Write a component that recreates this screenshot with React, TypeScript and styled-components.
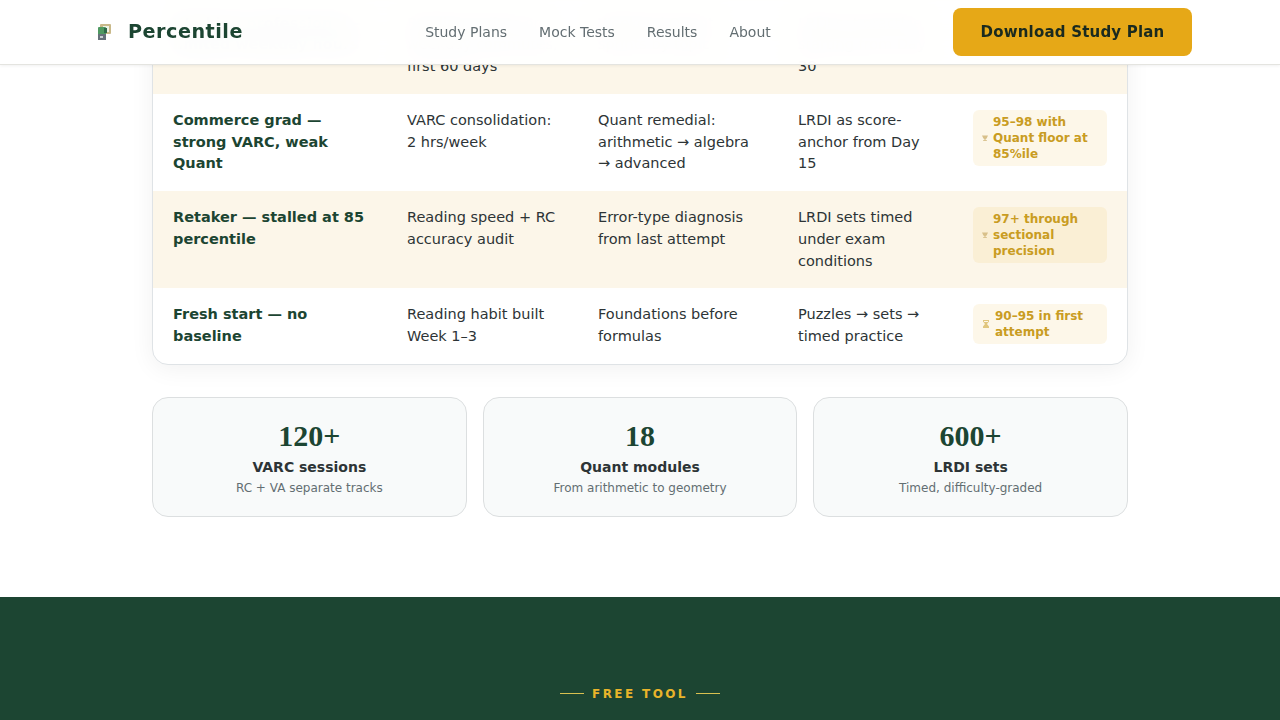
import React from 'react'
import styled, { createGlobalStyle } from 'styled-components'

const GREEN = '#1c4532'
const GOLD = '#e6a817'
const GOLD_TEXT = '#c99c22'
const SLATE = '#2d3436'
const MUTED = '#636e72'
const CREAM = '#fcf6e9'

const GlobalStyle = createGlobalStyle`
  html, body {
    margin: 0;
    padding: 0;
    height: 720px;
    overflow: hidden;
    background: #fff;
    font-family: "DejaVu Sans", Verdana, sans-serif;
    color: ${SLATE};
  }
  * { box-sizing: border-box; }
`

const Nav = styled.nav`
  position: fixed;
  top: 0;
  left: 0;
  right: 0;
  z-index: 10;
  height: 65px;
  padding: 0 88px 1px;
  display: flex;
  align-items: center;
  justify-content: space-between;
  background: rgba(255, 255, 255, 0.96);
  backdrop-filter: blur(12px);
  border-bottom: 1px solid #e4e4e0;
  box-shadow: 0 1px 3px rgba(0, 0, 0, 0.06);
`

const Brand = styled.div`
  display: flex;
  align-items: center;
  gap: 16px;
  padding-left: 8px;
  font-size: 19.2px;
  font-weight: 700;
  letter-spacing: 0.5px;
  color: ${GREEN};
`

const NavLinks = styled.div`
  display: flex;
  gap: 32px;
`

const NavLink = styled.a`
  font-size: 14px;
  color: ${MUTED};
  text-decoration: none;
`

const CtaButton = styled.button`
  width: 239px;
  height: 48px;
  padding: 0;
  border: 0;
  border-radius: 8px;
  background: ${GOLD};
  color: #1a2a1f;
  font-family: inherit;
  font-size: 15px;
  font-weight: 700;
  letter-spacing: 0.2px;
`

const Plans = styled.section`
  width: 976px;
  margin: -4.4px auto 0;
  padding-bottom: 80px;
`

const TableCard = styled.div`
  border: 1px solid #dfe3e6;
  border-radius: 16px;
  overflow: hidden;
  box-shadow: 0 4px 24px rgba(0, 0, 0, 0.06);
  background: #fff;
`

const Table = styled.table`
  width: 100%;
  table-layout: fixed;
  border-collapse: collapse;
  font-size: 14.5px;
  line-height: 21.75px;
`

const Col = styled.col<{ $w: number }>`
  width: ${({ $w }) => $w}px;
`

const Row = styled.tr`
  &:nth-child(odd) {
    background: ${CREAM};
  }
`

const Cell = styled.td`
  padding: 16px 20px;
  vertical-align: top;
`

const ProfileCell = styled(Cell)`
  font-weight: 700;
  color: ${GREEN};
`

const Badge = styled.div`
  display: flex;
  align-items: center;
  gap: 4px;
  padding: 4px 8px;
  border-radius: 6px;
  background: rgba(232, 180, 40, 0.1);
  color: ${GOLD_TEXT};
  font-size: 12px;
  font-weight: 700;
  line-height: 16px;
`

const BadgeIcon = styled.svg`
  flex: none;
`

const StatGrid = styled.div`
  display: grid;
  grid-template-columns: repeat(3, 1fr);
  gap: 16px;
  margin-top: 32px;
`

const StatCard = styled.div`
  height: 120px;
  padding: 20px;
  text-align: center;
  background: #f8fafa;
  border: 1px solid #dcdfe0;
  border-radius: 16px;
`

const StatValue = styled.div`
  font-family: "Liberation Serif", "Times New Roman", serif;
  font-size: 30px;
  font-weight: 700;
  line-height: 36px;
  color: ${GREEN};
`

const StatLabel = styled.div`
  margin-top: 3px;
  font-size: 14px;
  font-weight: 700;
  line-height: 20px;
  color: ${SLATE};
`

const StatNote = styled.div`
  margin-top: 2px;
  font-size: 12px;
  line-height: 18px;
  color: ${MUTED};
`

const ToolSection = styled.section`
  height: 124px;
  padding-top: 89px;
  background: ${GREEN};
`

const Eyebrow = styled.div`
  display: flex;
  align-items: center;
  justify-content: center;
  gap: 8px;
  font-size: 12px;
  font-weight: 700;
  line-height: 16px;
  letter-spacing: 2.4px;
  color: #e9b42a;

  &::before,
  &::after {
    content: '';
    width: 24px;
    height: 1px;
    background: #d8c050;
  }
`

const LogoMark = () => (
  <svg width="16" height="18" viewBox="0 0 16 18" aria-hidden="true">
    <rect x="4" y="1" width="11" height="10" rx="1" fill="#c9b98a" />
    <rect x="7" y="3" width="6" height="6" fill="#eef3e6" />
    <rect x="2" y="4" width="8" height="8" rx="1" fill="#4f9a62" />
    <rect x="8" y="5" width="3" height="5" fill="#2f6b49" />
    <rect x="2" y="11" width="8" height="6" fill="#66717a" />
    <rect x="4" y="13" width="3" height="2" fill="#c9d0d4" />
  </svg>
)

const CupIcon = () => (
  <BadgeIcon width="8" height="8" viewBox="0 0 8 8" aria-hidden="true">
    <path d="M1 1.5h6L5.6 4.4 4.6 5v1.2H6V7H2v-.8h1.4V5l-1-.6z" fill="#d8c08a" />
  </BadgeIcon>
)

const GlassIcon = () => (
  <BadgeIcon width="10" height="10" viewBox="0 0 10 10" aria-hidden="true">
    <path d="M2 1h6v1.4L6 5l2 2.6V9H2V7.6L4 5 2 2.4z" fill="#e0c67e" />
    <rect x="3" y="2" width="4" height="1" fill="#fdf6e8" />
  </BadgeIcon>
)

const plans = [
  {
    profile: 'Working professional — limited weekday hours',
    varc: 'Reading sprints on weekday commutes, first\u00a060\u00a0days',
    quant: 'Weekend Quant sprints by topic',
    lrdi: 'LRDI set practice, starting from Day 30',
    target: '97+ on a tight schedule',
    icon: <CupIcon />,
  },
  {
    profile: 'Commerce grad — strong VARC, weak Quant',
    varc: 'VARC consolidation: 2 hrs/week',
    quant: 'Quant remedial: arithmetic → algebra → advanced',
    lrdi: 'LRDI as score-anchor from Day 15',
    target: '95–98 with Quant floor at 85%ile',
    icon: <CupIcon />,
  },
  {
    profile: 'Retaker — stalled at 85 percentile',
    varc: 'Reading speed + RC accuracy audit',
    quant: 'Error-type diagnosis from last attempt',
    lrdi: 'LRDI sets timed under exam conditions',
    target: '97+ through sectional precision',
    icon: <CupIcon />,
  },
  {
    profile: 'Fresh start — no baseline',
    varc: 'Reading habit built Week 1–3',
    quant: 'Foundations before formulas',
    lrdi: 'Puzzles → sets → timed practice',
    target: '90–95 in first attempt',
    icon: <GlassIcon />,
  },
]

const stats = [
  { value: '120+', label: 'VARC sessions', note: 'RC + VA separate tracks' },
  { value: '18', label: 'Quant modules', note: 'From arithmetic to geometry' },
  { value: '600+', label: 'LRDI sets', note: 'Timed, difficulty-graded' },
]

const columnWidths = [234, 191, 200, 175, 174]

export default function App() {
  return (
    <>
      <GlobalStyle />
      <Nav>
        <Brand>
          <LogoMark />
          Percentile
        </Brand>
        <NavLinks>
          <NavLink href="#plans">Study Plans</NavLink>
          <NavLink href="#mocks">Mock Tests</NavLink>
          <NavLink href="#results">Results</NavLink>
          <NavLink href="#about">About</NavLink>
        </NavLinks>
        <CtaButton>Download Study Plan</CtaButton>
      </Nav>
      <Plans id="plans">
        <TableCard>
          <Table>
            <colgroup>
              {columnWidths.map((w, i) => (
                <Col key={i} $w={w} />
              ))}
            </colgroup>
            <tbody>
              {plans.map((plan) => (
                <Row key={plan.profile}>
                  <ProfileCell>{plan.profile}</ProfileCell>
                  <Cell>{plan.varc}</Cell>
                  <Cell>{plan.quant}</Cell>
                  <Cell>{plan.lrdi}</Cell>
                  <Cell>
                    <Badge>
                      {plan.icon}
                      <span>{plan.target}</span>
                    </Badge>
                  </Cell>
                </Row>
              ))}
            </tbody>
          </Table>
        </TableCard>
        <StatGrid>
          {stats.map((stat) => (
            <StatCard key={stat.label}>
              <StatValue>{stat.value}</StatValue>
              <StatLabel>{stat.label}</StatLabel>
              <StatNote>{stat.note}</StatNote>
            </StatCard>
          ))}
        </StatGrid>
      </Plans>
      <ToolSection>
        <Eyebrow>FREE TOOL</Eyebrow>
      </ToolSection>
    </>
  )
}
